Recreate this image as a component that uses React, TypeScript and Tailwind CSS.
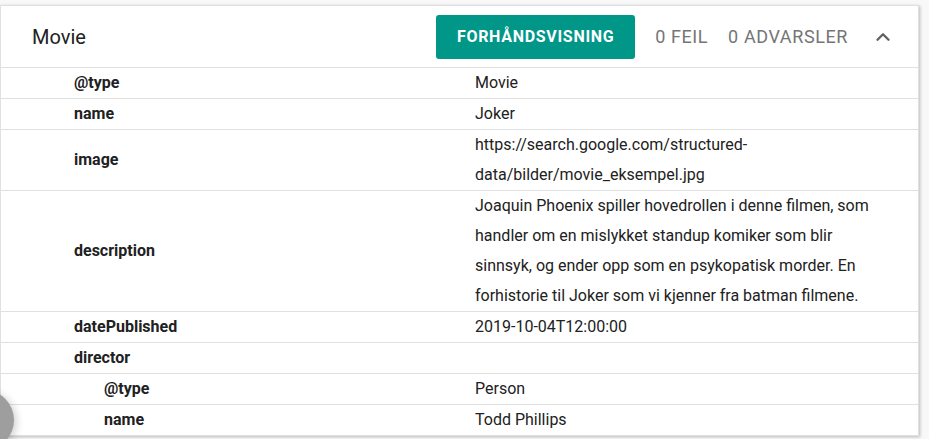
import { ChevronUp } from 'lucide-react';

type Row = {
  label: string;
  value?: string;
  nested?: boolean;
};

// Structured data rows shown under the Movie header
const rows: Row[] = [
  { label: '@type', value: 'Movie' },
  { label: 'name', value: 'Joker' },
  { label: 'image', value: 'https://search.google.com/structured-data/bilder/movie_eksempel.jpg' },
  {
    label: 'description',
    value:
      'Joaquin Phoenix spiller hovedrollen i denne filmen, som handler om en mislykket standup komiker som blir sinnsyk, og ender opp som en psykopatisk morder. En forhistorie til Joker som vi kjenner fra batman filmene.',
  },
  { label: 'datePublished', value: '2019-10-04T12:00:00' },
  { label: 'director' },
  { label: '@type', value: 'Person', nested: true },
  { label: 'name', value: 'Todd Phillips', nested: true },
];

function DataRow({ row }: { row: Row }) {
  return (
    <div className="flex items-center border-b border-[#e0e0e0] last:border-b-0">
      <div
        className={`w-[474px] shrink-0 font-bold text-[16px] text-[#212121] leading-[30px] ${
          row.nested ? 'pl-[103px]' : 'pl-[73px]'
        }`}
      >
        {row.label}
      </div>
      <div className="w-[408px] min-h-[30px] text-[16px] text-[#212121] leading-[30px] break-words">
        {row.value}
      </div>
    </div>
  );
}

export default function App() {
  return (
    <div className="relative h-[439px] overflow-hidden bg-[#f8f8f8] pt-[5px] font-['Roboto',sans-serif]">
      <div className="w-[919px] bg-white border border-[#e0e0e0] shadow-[1px_1px_3px_rgba(0,0,0,0.25)]">
        {/* header */}
        <div className="flex items-center h-[62px] pl-[31px] pr-[24px] border-b border-[#e0e0e0]">
          <div className="text-[20px] text-[#212121]">Movie</div>
          <div className="ml-auto flex items-center">
            <button className="h-[44px] w-[199px] rounded-[3px] bg-[#009688] text-white text-[16px] font-bold tracking-[0.7px]">
              FORHÅNDSVISNING
            </button>
            <span className="ml-[20px] text-[18px] tracking-[0.6px] text-[#757575]">0 FEIL</span>
            <span className="ml-[20px] text-[18px] tracking-[0.6px] text-[#757575]">0 ADVARSLER</span>
            <ChevronUp className="ml-[24px] text-[#616161]" size={22} strokeWidth={2.6} />
          </div>
        </div>

        <div>
          {rows.map((row, i) => (
            <DataRow key={i} row={row} />
          ))}
        </div>
      </div>

      {/* partially visible floating button */}
      <div className="absolute left-[-46px] top-[390px] w-[60px] h-[60px] rounded-full bg-[#9e9e9e] shadow-[2px_2px_8px_rgba(0,0,0,0.2)]" />
    </div>
  );
}
